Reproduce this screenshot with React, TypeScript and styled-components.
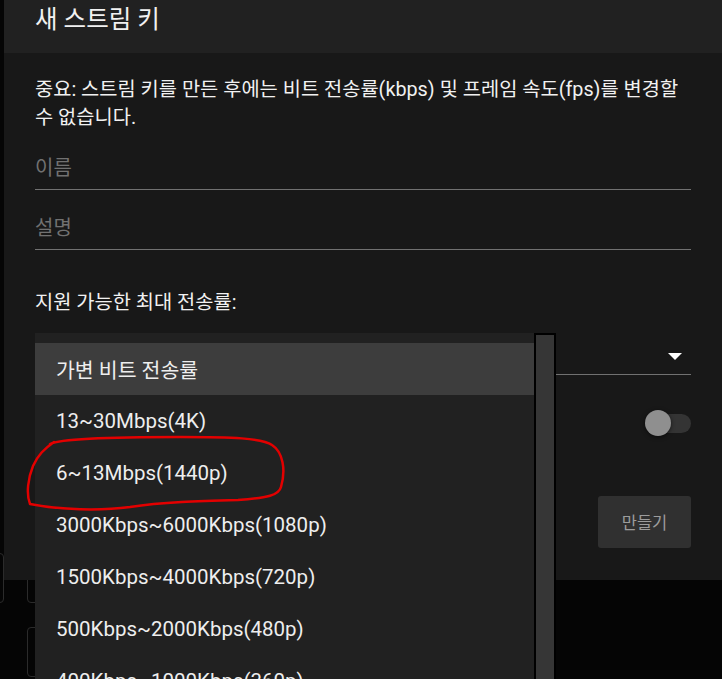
import { FC } from "react";
import styled, { createGlobalStyle } from "styled-components";

const GlobalStyle = createGlobalStyle`
  html, body {
    margin: 0;
    padding: 0;
    background-color: #050505;
  }
  body {
    font-family: Roboto, "Noto Sans CJK KR", sans-serif;
  }
`;

const Page = styled.div`
  position: relative;
  width: 722px;
  height: 679px;
  overflow: hidden;
  background-color: #050505;
`;

// 다이얼로그 뒤에 살짝 보이는 페이지 조각
const Backdrop = styled.div`
  display: grid;
  grid-template-columns: 50px 80px;
  grid-auto-rows: 50px;
  column-gap: 23px;
  row-gap: 24px;
  padding-top: 553px;
  margin-left: -46px;
`;

const GhostBox = styled.div<{ $col: number; $row: number }>`
  grid-column: ${(p) => p.$col};
  grid-row: ${(p) => p.$row};
  border: 1px solid #2b2b2b;
  border-radius: 4px;
`;

const Dialog = styled.section`
  position: absolute;
  top: 0;
  left: 4px;
  width: 718px;
  height: 580px;
  display: flex;
  flex-direction: column;
  background-color: #181818;
  color: #f1f1f1;
`;

const DialogHeader = styled.header`
  height: 53px;
  box-sizing: border-box;
  padding: 4px 31px 0;
  background-color: #212121;
`;

const Title = styled.h2`
  margin: 0;
  font-size: 24.5px;
  font-weight: 400;
  line-height: 32px;
`;

const DialogBody = styled.div`
  flex: 1;
  display: flex;
  flex-direction: column;
  padding: 23px 31px 32px;
`;

const Notice = styled.p`
  margin: 0;
  font-size: 19.8px;
  line-height: 28px;
`;

const TextInput = styled.input<{ $gap: number }>`
  margin-top: ${(p) => p.$gap}px;
  height: 48px;
  box-sizing: border-box;
  padding: 14px 0 9px;
  border: none;
  border-bottom: 1px solid #717171;
  background: transparent;
  color: #f1f1f1;
  font-family: inherit;
  font-size: 20px;
  line-height: 24px;
  outline: none;
  &::placeholder {
    color: #717171;
  }
`;

const Label = styled.div`
  margin-top: 41px;
  font-size: 19.8px;
  line-height: 24px;
`;

const SelectBox = styled.div`
  margin-top: 12px;
  height: 48px;
  box-sizing: border-box;
  display: flex;
  justify-content: flex-end;
  align-items: center;
  padding: 12px 9px 0 0;
  border-bottom: 1px solid #717171;
`;

const Arrow = styled.span`
  width: 0;
  height: 0;
  border-left: 7px solid transparent;
  border-right: 7px solid transparent;
  border-top: 7px solid #ffffff;
`;

const ToggleRow = styled.div`
  margin-top: 35px;
  height: 26px;
  display: flex;
  justify-content: flex-end;
  align-items: center;
`;

const Track = styled.div`
  position: relative;
  width: 36px;
  height: 19px;
  border-radius: 10px;
  background-color: #343434;
`;

const Thumb = styled.div`
  position: absolute;
  left: -10px;
  top: -3.5px;
  width: 26px;
  height: 26px;
  border-radius: 50%;
  background-color: #8f8f8f;
  box-shadow: 0 1px 4px rgba(0, 0, 0, 0.6);
`;

const ButtonRow = styled.div`
  margin-top: 60px;
  display: flex;
  justify-content: flex-end;
`;

const CreateButton = styled.button`
  width: 93px;
  height: 52px;
  border: none;
  border-radius: 3px;
  background-color: #303030;
  color: #9c9c9c;
  font-family: inherit;
  font-size: 16.5px;
`;

// 열린 드롭다운 메뉴
const Menu = styled.div`
  position: absolute;
  left: 35px;
  top: 333px;
  height: 400px;
  display: flex;
`;

const MenuList = styled.ul`
  margin: 0;
  padding: 10px 0 0;
  list-style: none;
  width: 499px;
  background-color: #212121;
`;

const MenuItem = styled.li<{ $active?: boolean }>`
  height: 52px;
  display: flex;
  align-items: center;
  padding-left: 21px;
  font-size: 20.5px;
  color: #eeeeee;
  background-color: ${(p) => (p.$active ? "#3d3d3d" : "transparent")};
`;

const Scrollbar = styled.div`
  width: 18px;
  border: 2px solid #000000;
  border-bottom: none;
  background-color: #363636;
`;

const Annotation = styled.svg`
  position: absolute;
  top: 0;
  left: 0;
  pointer-events: none;
`;

const OPTIONS = [
  "13~30Mbps(4K)",
  "6~13Mbps(1440p)",
  "3000Kbps~6000Kbps(1080p)",
  "1500Kbps~4000Kbps(720p)",
  "500Kbps~2000Kbps(480p)",
  "400Kbps~1000Kbps(360p)",
];

const App: FC = () => {
  return (
    <Page>
      <GlobalStyle />
      <Backdrop>
        <GhostBox $col={1} $row={1} />
        <GhostBox $col={2} $row={1} />
        <GhostBox $col={2} $row={2} />
      </Backdrop>

      <Dialog>
        <DialogHeader>
          <Title>새 스트림 키</Title>
        </DialogHeader>
        <DialogBody>
          <Notice>
            중요: 스트림 키를 만든 후에는 비트 전송률(kbps) 및 프레임 속도(fps)를 변경할 수 없습니다.
          </Notice>
          <TextInput $gap={10} placeholder="이름" />
          <TextInput $gap={12} placeholder="설명" />
          <Label>지원 가능한 최대 전송률:</Label>
          <SelectBox>
            <Arrow />
          </SelectBox>
          <ToggleRow>
            <Track>
              <Thumb />
            </Track>
          </ToggleRow>
          <ButtonRow>
            <CreateButton>만들기</CreateButton>
          </ButtonRow>
        </DialogBody>
      </Dialog>

      <Menu>
        <MenuList>
          <MenuItem $active>가변 비트 전송률</MenuItem>
          {OPTIONS.map((o) => (
            <MenuItem key={o}>{o}</MenuItem>
          ))}
        </MenuList>
        <Scrollbar />
      </Menu>

      <Annotation width={722} height={679} viewBox="0 0 722 679">
        <path
          d="M50 444 C 62 438, 120 437, 180 437 C 232 437, 262 438, 272 445 C 283 452, 286 470, 281 487 C 279 495, 268 498, 238 500 C 200 501, 162 502, 130 507 C 100 511, 60 510, 30 504 C 26 494, 28 478, 33 466 C 38 455, 44 449, 54 442"
          fill="none"
          stroke="#e30000"
          strokeWidth={2.5}
          strokeLinecap="round"
        />
      </Annotation>
    </Page>
  );
};

export default App;
